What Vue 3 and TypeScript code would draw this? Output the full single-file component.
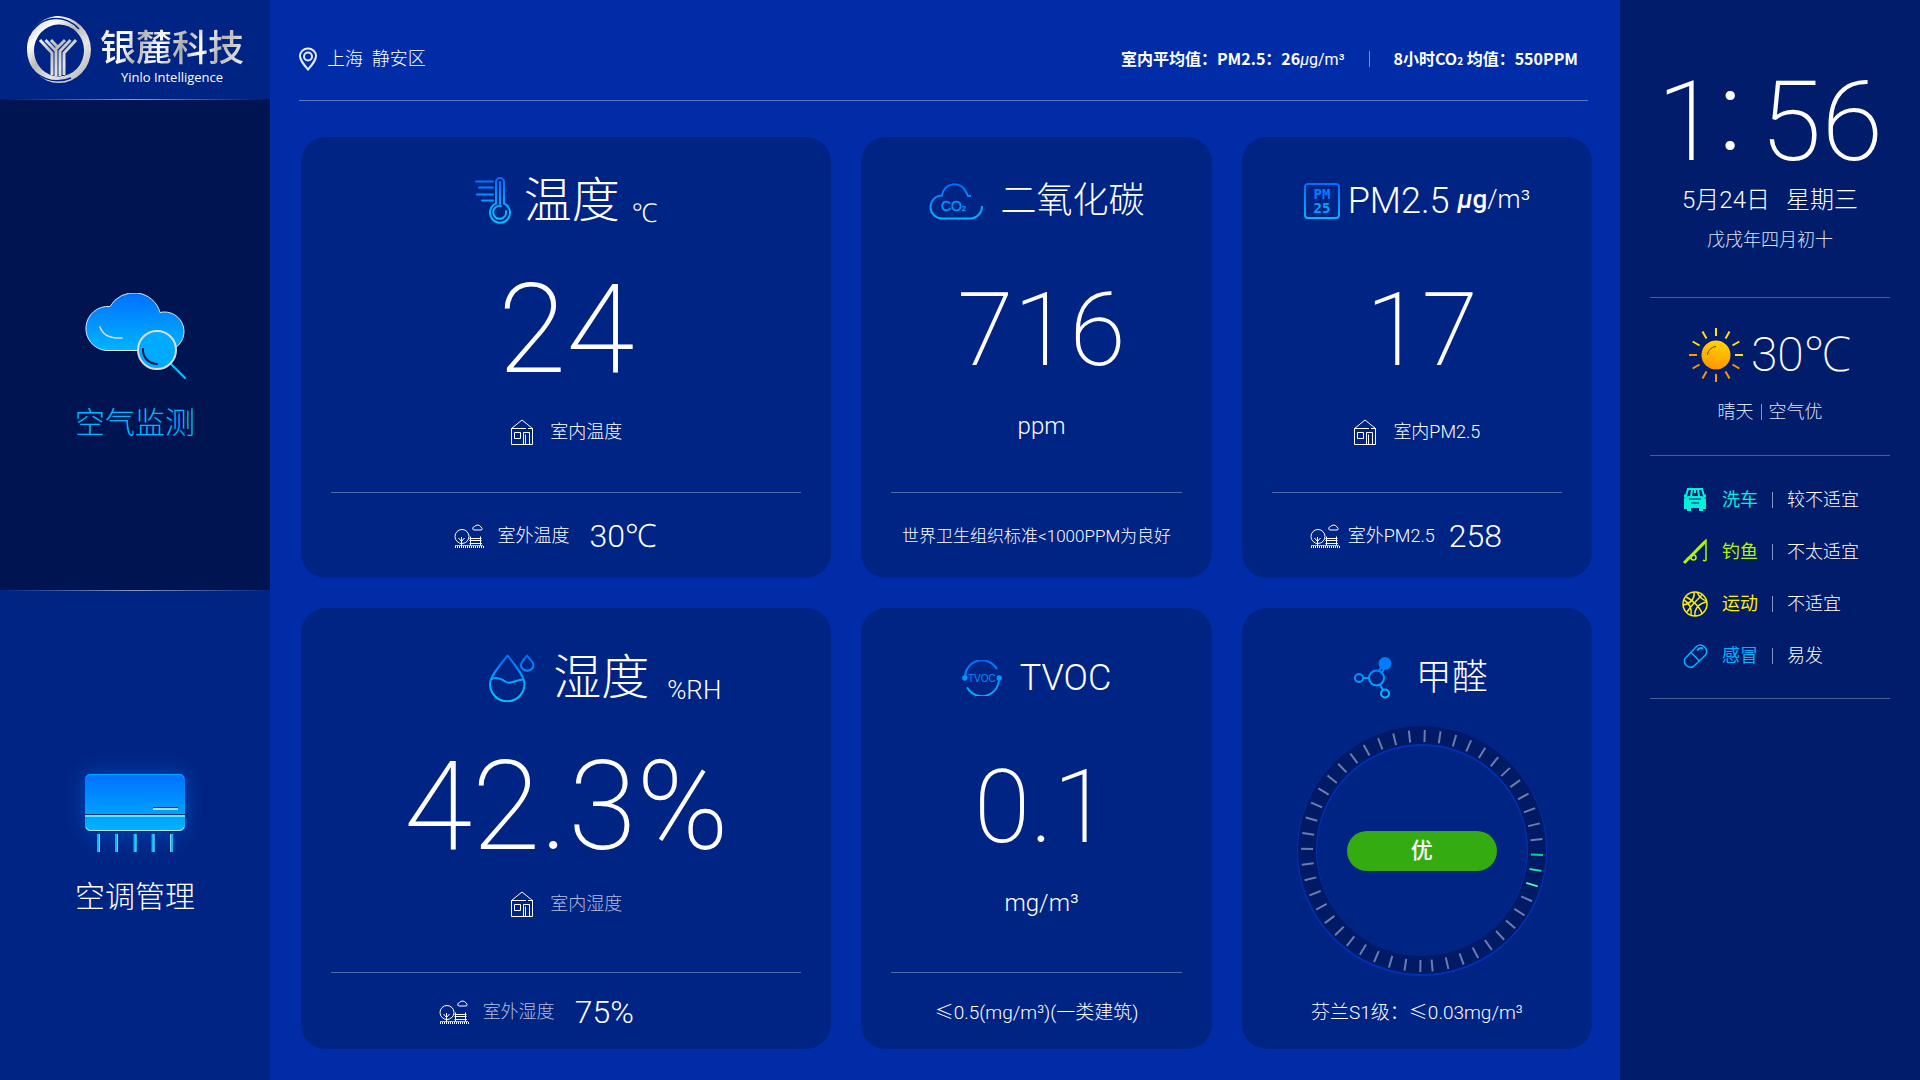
<script setup lang="ts">
interface Tick {
  angle: number
  color: string
}

interface Advice {
  key: string
  label: string
  value: string
  color: string
}

const greens: Record<number, string> = { 12: '#00d98b', 13: '#1fe59a', 14: '#5cf0b4' }

const ticks: Tick[] = []
for (let i = 0; i < 24; i++) {
  ticks.push({ angle: 1.3 + i * 7.55, color: greens[i] ?? '#6a7db0' })
}
for (let i = 0; i < 24; i++) {
  ticks.push({ angle: 180.8 + i * 7.52, color: '#6a7db0' })
}

const rays: number[] = Array.from({ length: 12 }, (_, i) => i * 30)

const advice: Advice[] = [
  { key: 'wash', label: '洗车', value: '较不适宜', color: '#00f0dc' },
  { key: 'fish', label: '钓鱼', value: '不太适宜', color: '#b4f500' },
  { key: 'sport', label: '运动', value: '不适宜', color: '#fff000' },
  { key: 'cold', label: '感冒', value: '易发', color: '#00b4ff' },
]
</script>

<template>
  <div class="screen">
    <svg class="defs" width="0" height="0" aria-hidden="true">
      <defs>
        <linearGradient id="blue" gradientUnits="userSpaceOnUse" x1="0" y1="0" x2="0" y2="42">
          <stop offset="0" stop-color="#006cff" />
          <stop offset="1" stop-color="#00c4ff" />
        </linearGradient>
        <linearGradient id="panel" x1="0" y1="0" x2="0" y2="1">
          <stop offset="0" stop-color="#0070ff" />
          <stop offset="1" stop-color="#00b4ff" />
        </linearGradient>
        <linearGradient id="silver" gradientUnits="userSpaceOnUse" x1="0" y1="0" x2="64" y2="67">
          <stop offset="0" stop-color="#b0b0b0" />
          <stop offset="0.25" stop-color="#ffffff" />
          <stop offset="0.45" stop-color="#b9b9b9" />
          <stop offset="0.65" stop-color="#e6e6e6" />
          <stop offset="1" stop-color="#a8a8a8" />
        </linearGradient>
        <linearGradient id="sun" gradientUnits="userSpaceOnUse" x1="32" y1="0" x2="22" y2="54">
          <stop offset="0" stop-color="#fff200" />
          <stop offset="0.5" stop-color="#ffb400" />
          <stop offset="1" stop-color="#ff7800" />
        </linearGradient>
        <symbol id="house" viewBox="0 0 24 26">
          <g fill="none" stroke="currentColor" stroke-width="1">
            <path d="M1.500 9.500 12 1 22.500 9.500M1.500 9.500V25.500H22.500V9.500M1 9.500H16M18 9.500H23" />
            <path d="M4.500 13.500H10.500V19.500H4.500ZM13.500 25V13.500H19.500V25M15.500 15.500V25" />
          </g>
        </symbol>
        <symbol id="park" viewBox="0 0 30 24">
          <g fill="none" stroke="currentColor" stroke-width="1">
            <circle cx="8" cy="12.500" r="7" />
            <path d="M7.500 22V13M4.500 14 7.500 17.500 10.500 14" />
            <path d="M19.500 6H27.500A2 2 0 0 0 27 3 4 4 0 0 0 20.500 2.500 2 2 0 0 0 19.500 6Z" />
            <path d="M16.500 12.500V21.500M26.500 12.500V21.500M15.500 14.500H27.500M15.500 16.500H27.500M15.500 19.500H28" />
            <path d="M1 23H30" stroke-width="2" stroke-dasharray="1 1" />
            <path d="M1 21.500H29" opacity="0.700" />
          </g>
        </symbol>
      </defs>
    </svg>

    <aside class="side">
      <div class="brand">
        <svg class="brand-mark" width="64" height="68" viewBox="0 0 64 68" aria-hidden="true">
          <path fill="url(#silver)" fill-rule="evenodd" d="M0 34A32 33 0 0 1 29 0 34 34 0 0 1 64 34 32 33.500 0 0 1 32 67 32 33 0 0 1 0 34ZM7 35A25 26 0 1 0 57 34 25 26 0 1 0 7 35Z" />
          <path fill="none" stroke="#002484" stroke-width="1.500" d="M2 20A30 30 0 0 1 52 13M1 46A32 30 0 0 0 44 62" />
          <g fill="none" stroke="url(#silver)" stroke-width="3">
            <path d="M13 24 25 37V59M18.500 24 29 35V60M24 24 31 31.500M49 24 37 37V59M43.500 24 33 35V60M38 24 29 33" />
          </g>
        </svg>
        <div class="brand-text">
          <strong class="brand-name">银麓科技</strong>
          <span class="brand-en">Yinlo Intelligence</span>
        </div>
      </div>
      <nav class="nav">
        <a class="nav-item active" href="#air">
          <svg width="104" height="86" viewBox="0 0 104 86" aria-hidden="true">
            <path d="M23 57.500A22 22 0 1 1 27 13.500 27 26 0 0 1 77 19.500 19.500 19.500 0 1 1 86 57.500Z" fill="url(#panel)" stroke="#dfe6ee" />
            <path d="M17 34Q21 46 39 45" fill="none" stroke="#dcdcdc" stroke-width="1.500" stroke-linecap="round" />
            <path d="M88 71 102 85" stroke="#00c4ff" stroke-width="2" stroke-linecap="round" />
            <circle cx="74" cy="57" r="19" fill="#00aaff" stroke="#dcdcdc" stroke-width="2" />
            <path d="M60 56A14 14 0 0 0 74 71" fill="none" stroke="#001452" stroke-width="2" stroke-linecap="round" />
          </svg>
          <span>空气监测</span>
        </a>
        <a class="nav-item" href="#conditioner">
          <svg class="glow" width="102" height="80" viewBox="0 0 102 80" aria-hidden="true">
            <rect x="1" y="1" width="100" height="57" rx="5" fill="url(#panel)" />
            <path d="M2 5A5 5 0 0 1 6 1.500H96A5 5 0 0 1 100 5" fill="none" stroke="#00a8ff" />
            <path d="M2 54A5 5 0 0 0 6 57.500H96A5 5 0 0 0 100 54" fill="none" stroke="#c8dce8" />
            <path d="M1 41.500H101M69 34.500H94" stroke="#00307e" />
            <path d="M1 43H101" stroke="#5fe6f5" stroke-width="2" />
            <path d="M69 36H94" stroke="#b4d8d8" stroke-width="2" />
            <path d="M14.500 61V79M32.500 61V79M51 61V79M69 61V79M87.500 61V79" stroke="#00b9ff" stroke-width="3" />
            <path d="M15.500 61V79M33.500 61V79M52 61V79M70 61V79M86.500 61V79" stroke="#7fd8e0" stroke-width="1" />
          </svg>
          <span>空调管理</span>
        </a>
      </nav>
    </aside>

    <main class="main">
      <header class="top">
        <div class="place">
          <svg width="20" height="24" viewBox="0 0 20 24" fill="none" stroke="#e6ebf7" stroke-width="2" aria-hidden="true">
            <path d="M9 22.500C4 16.500 1 13 1 9A8 7.500 0 0 1 17 9C17 13 14 16.500 9 22.500Z" />
            <circle cx="9" cy="9.500" r="4" />
          </svg>
          <span>上海&nbsp; 静安区</span>
        </div>
        <div class="averages">
          <span>室内平均值：PM2.5：26<span class="thin"><i>µ</i>g/m³</span></span>
          <span class="bar"></span>
          <span>8小时CO<small>2</small> 均值：550PPM</span>
        </div>
      </header>

      <div class="grid">
        <section class="card">
          <h2 class="head large">
            <svg width="37" height="48" viewBox="0 0 37 48" fill="none" stroke="url(#blue)" stroke-width="2" stroke-linecap="round" aria-hidden="true">
              <path d="M1 4.500H18M4 10.500H18M2 17.500H18M7 23.500H18" />
              <path d="M21 26.500V5A4 4 0 0 1 29 5V26.500A10 10 0 1 1 21 26.500Z" />
              <path d="M25 5V27M26 29A6.500 6.500 0 1 0 31 34" />
            </svg>
            <span>温度</span>
            <small class="unit">℃</small>
          </h2>
          <p class="value big">24</p>
          <p class="note"><svg width="24" height="26" aria-hidden="true"><use href="#house" /></svg>室内温度</p>
          <p class="foot out"><svg width="30" height="24" aria-hidden="true"><use href="#park" /></svg>室外温度<b>30℃</b></p>
        </section>

        <section class="card">
          <h2 class="head">
            <svg width="54" height="37" viewBox="0 0 54 37" fill="none" stroke="url(#blue)" stroke-width="2" aria-hidden="true">
              <path d="M53 23A12 12 0 0 1 41 35.500H13A11.500 11.500 0 0 1 13 12.500A12.500 12.500 0 0 1 37 9L39 13H42" />
              <text x="12" y="28" class="glyph" font-size="14" fill="#0096ff" stroke="#0096ff" stroke-width="0.400">CO<tspan font-size="7">2</tspan></text>
            </svg>
            <span>二氧化碳</span>
          </h2>
          <p class="value">716</p>
          <p class="note measure">ppm</p>
          <p class="foot fine">世界卫生组织标准&lt;1000PPM为良好</p>
        </section>

        <section class="card">
          <h2 class="head tight">
            <svg width="36" height="36" viewBox="0 0 36 36" aria-hidden="true">
              <rect x="1" y="1" width="34" height="34" rx="3" fill="none" stroke="url(#blue)" stroke-width="2" />
              <text x="18" y="16" class="pixel" font-size="14" fill="#007eff">PM</text>
              <text x="18" y="30" class="pixel" font-size="14" fill="#00a4ff">25</text>
            </svg>
            <span>PM2.5</span>
            <small class="unit up"><i>µ</i><b>g</b>/m³</small>
          </h2>
          <p class="value">17</p>
          <p class="note"><svg width="24" height="26" aria-hidden="true"><use href="#house" /></svg>室内PM2.5</p>
          <p class="foot out narrow"><svg width="30" height="24" aria-hidden="true"><use href="#park" /></svg>室外PM2.5<b>258</b></p>
        </section>

        <section class="card lower">
          <h2 class="head large humid">
            <svg width="46" height="48" viewBox="0 0 46 48" fill="none" stroke="url(#blue)" stroke-width="2" stroke-linejoin="round" aria-hidden="true">
              <path d="M18.500 1.500C12 10 1 22 1 30A17 17 0 0 0 35.500 30C35.500 22 25 10 18.500 1.500Z" />
              <path d="M2.500 25C9 22 14 26 17 28 22 31 28 25 34.500 25.500" />
              <path d="M38 1.500C35.500 5 32 8 32 11A6 5.500 0 0 0 44.500 11C44.500 8 40.500 5 38 1.500Z" />
            </svg>
            <span>湿度</span>
            <small class="unit">%RH</small>
          </h2>
          <p class="value big">42.3%</p>
          <p class="note dim"><svg width="24" height="26" aria-hidden="true"><use href="#house" /></svg>室内湿度</p>
          <p class="foot out dim"><svg width="30" height="24" aria-hidden="true"><use href="#park" /></svg>室外湿度<b>75%</b></p>
        </section>

        <section class="card lower">
          <h2 class="head">
            <svg width="40" height="36" viewBox="0 0 40 36" fill="none" stroke="url(#blue)" stroke-width="2" stroke-linecap="round" aria-hidden="true">
              <path d="M3 18A17 17 0 0 1 34.500 8.500M37 18A17 17 0 0 1 5.500 28" />
              <circle cx="2.800" cy="18" r="2.700" fill="#0096ff" stroke="none" />
              <circle cx="37.200" cy="18" r="2.700" fill="#0096ff" stroke="none" />
              <text x="6" y="22" class="glyph" font-size="10" fill="#0090ff" stroke="none">TVOC</text>
            </svg>
            <span>TVOC</span>
          </h2>
          <p class="value">0.1</p>
          <p class="note measure">mg/m³</p>
          <p class="foot standard"><span><span class="cjk">≤</span>0.5(mg/m³)(一类建筑)</span></p>
        </section>

        <section class="card lower">
          <h2 class="head wide-gap">
            <svg width="38" height="42" viewBox="0 0 38 42" fill="none" stroke="url(#blue)" stroke-width="2" aria-hidden="true">
              <circle cx="22.500" cy="21" r="7.500" />
              <circle cx="5" cy="21" r="4" />
              <circle cx="31" cy="36.500" r="4" />
              <circle cx="31" cy="6.500" r="6.500" fill="#007aff" stroke="none" />
              <path d="M9 21.100H15M26 28 29 33M25 14 27.500 9.500M28 15.500 30 12" />
            </svg>
            <span>甲醛</span>
          </h2>
          <div class="gauge">
            <svg width="252" height="252" viewBox="-126 -126 252 252" aria-hidden="true">
              <circle r="115" fill="none" stroke="#0031b4" stroke-width="20" />
              <circle r="115" cy="-1" fill="none" stroke="#001a66" stroke-width="18" />
              <line
                v-for="t in ticks"
                :key="t.angle"
                y1="-121"
                y2="-109"
                :stroke="t.color"
                stroke-width="2"
                :transform="`rotate(${t.angle})`"
              />
            </svg>
            <span class="pill">优</span>
          </div>
          <p class="foot standard plain"><span>芬兰S1级：<span class="cjk">≤</span>0.03mg/m³</span></p>
        </section>
      </div>
    </main>

    <aside class="info">
      <div class="clock">
        <time class="time"><span>1</span><span class="colon">:</span><span>56</span></time>
        <p class="date"><span>5月24日</span><span>星期三</span></p>
        <p class="lunar">戊戌年四月初十</p>
      </div>
      <div class="weather">
        <div class="now">
          <svg width="54" height="56" viewBox="0 0 54 54" aria-hidden="true">
            <circle cx="27" cy="27" r="14.500" fill="url(#sun)" />
            <path
              v-for="r in rays"
              :key="r"
              d="M26 0H28V8H26Z"
              :fill="r > 90 && r < 285 ? '#ff9600' : '#ffe600'"
              :transform="`rotate(${r} 27 27)`"
            />
            <path d="M18.500 27A9 9 0 0 1 27 18.500" fill="none" stroke="#6a4a00" />
          </svg>
          <span>30℃</span>
        </div>
        <p class="sky">晴天<span class="bar"></span>空气优</p>
      </div>
      <ul class="advice">
        <li v-for="a in advice" :key="a.key">
          <svg width="26" height="26" viewBox="0 0 26 26" fill="none" :stroke="a.color" stroke-width="1.500" aria-hidden="true">
            <template v-if="a.key === 'wash'">
              <path d="M5 2H21M6 2 4 9M20 2 22 9M10 3 9 9M16 3 17 9M13 3V6" stroke-width="2" />
              <path d="M2 13C2 10 5 9 8 9H18C21 9 24 10 24 13V22H21V24H17V21H9V24H5V22H2Z" :fill="a.color" stroke="none" />
              <path d="M2 9H5M21 9H24" stroke-width="3" />
              <path d="M7 12H19M9 16H17" stroke="#001c6b" stroke-width="1" />
            </template>
            <template v-else-if="a.key === 'fish'">
              <path d="M2 24 23 3" stroke-width="3" />
              <path d="M14 11 24 1V21A2 2 0 0 1 21 21" />
              <circle cx="11.500" cy="18.500" r="2.500" />
              <path d="M5 20 9 18" stroke-width="2" />
            </template>
            <template v-else-if="a.key === 'sport'">
              <circle cx="13" cy="13" r="12" />
              <path d="M4 6C9 8 18 16 20 22.500M20 4C14 10 8 16 5 21M12 1C13 8 8 13 1 14M25 11C17 12 12 18 13 25M15 1C17 6 21 9 25 10M2 9C7 12 10 17 9 24" />
            </template>
            <template v-else>
              <path d="M3 15.500 14.500 3.500A6.300 6.300 0 0 1 23.500 12L11.500 23.500A6.200 6.200 0 0 1 3 15.500ZM9 9.500 17 17.500" />
              <path d="M15 7.500C17 5 19 4.500 21 5.500" stroke-width="2" />
            </template>
          </svg>
          <span class="label" :style="{ color: a.color }">{{ a.label }}</span>
          <span class="bar"></span>
          <span>{{ a.value }}</span>
        </li>
      </ul>
    </aside>
  </div>
</template>

<style>
body {
  margin: 0;
  background: #002da7;
}
</style>

<style scoped>
.screen {
  display: grid;
  grid-template-columns: 270px minmax(0, 1fr) 300px;
  min-height: 100vh;
  background: #002da7;
  color: #fff;
  font-family: Roboto, "Noto Sans", "Noto Sans CJK SC", sans-serif;
  font-size: 18px;
  font-weight: 300;
  line-height: 24px;
}

.defs {
  position: absolute;
}

p,
h2,
ul {
  margin: 0;
  padding: 0;
}

svg {
  flex: none;
}

.glyph {
  font-family: "Liberation Sans", Arial, sans-serif;
}

.pixel {
  font-family: "DejaVu Sans Mono", monospace;
  font-weight: 700;
  text-anchor: middle;
}

.cjk {
  font-family: "Noto Sans CJK SC", sans-serif;
}

.bar {
  display: inline-block;
  width: 1px;
  height: 16px;
  background: #8492c4;
}

/* Left column */
.side {
  display: flex;
  flex-direction: column;
  background: #002484;
}

.brand {
  display: flex;
  align-items: center;
  gap: 9px;
  height: 99px;
  padding-left: 27px;
}

.brand-text {
  display: flex;
  flex-direction: column;
  align-items: center;
  padding-top: 14px;
}

.brand-name {
  font-size: 36px;
  font-weight: 500;
  line-height: 40px;
  background: linear-gradient(110deg, #e8e8e8, #fff 18%, #b0b0b0 28%, #fff 42%, #a8a8a8 56%, #fff 68%, #b4b4b4 80%, #f4f4f4);
  background-clip: text;
  color: transparent;
}

.brand-en {
  font-family: "Open Sans", sans-serif;
  font-size: 13px;
  font-weight: 500;
  line-height: 16px;
}

.nav {
  display: grid;
  flex: 1;
  grid-template-rows: 1fr 1fr;
}

.nav-item {
  display: flex;
  flex-direction: column;
  align-items: center;
  gap: 24px;
  padding-top: 182px;
  color: #fff;
  font-size: 30px;
  line-height: 40px;
  text-decoration: none;
  border-top: 1px solid;
  border-image: linear-gradient(90deg, transparent, #8a97c8 50%, transparent) 1;
}

.nav-item.active {
  padding-top: 193px;
  background: #001452;
  color: #00b8ff;
}

.glow {
  filter: drop-shadow(0 0 10px rgba(0, 130, 255, 0.4));
}

/* Centre */
.main {
  display: flex;
  flex-direction: column;
  padding: 0 28px 31px 29px;
}

.top {
  display: flex;
  align-items: center;
  justify-content: space-between;
  height: 82px;
  margin-right: 4px;
  padding: 18px 10px 0 0;
  border-bottom: 1px solid #5f78c6;
}

.place,
.averages {
  display: flex;
  align-items: center;
}

.place {
  gap: 8px;
}

.averages {
  gap: 24px;
  font-family: "Noto Sans CJK SC", sans-serif;
  font-size: 16px;
  font-weight: 700;
}

.averages small {
  font-size: 10px;
}

.thin {
  font-family: Roboto, sans-serif;
  font-weight: 400;
}

.grid {
  display: grid;
  flex: 1;
  grid-template-columns: 53fr 35fr 35fr;
  grid-template-rows: 1fr 1fr;
  gap: 30px;
  padding: 36px 0 0 2px;
}

.card {
  display: flex;
  flex-direction: column;
  padding: 0 30px;
  border-radius: 25px;
  background: #002484;
}

.card.lower {
  padding-top: 6px;
}

.head {
  display: flex;
  align-items: center;
  justify-content: center;
  gap: 18px;
  height: 128px;
  margin-bottom: 3px;
  font-size: 36px;
  font-weight: 300;
  line-height: 48px;
}

.large {
  gap: 12px;
  font-size: 48px;
}

.tight {
  gap: 8px;
}

.wide-gap {
  gap: 24px;
  padding-left: 8px;
}

.humid {
  gap: 18px;
  padding-left: 78px;
}

.unit {
  align-self: flex-end;
  margin-bottom: 28px;
  font-size: 26px;
}

.unit.up {
  align-self: center;
  margin-bottom: 4px;
}

.unit b,
.unit i {
  font-weight: 500;
}

.value {
  padding-left: 10px;
  font-size: 102px;
  font-weight: 200;
  line-height: 124px;
  text-align: center;
}

.big {
  padding-left: 0;
  font-size: 124px;
}

.note {
  display: flex;
  align-items: center;
  justify-content: center;
  gap: 16px;
  height: 80px;
}

.lower .note {
  height: 70px;
}

.note.measure {
  padding: 0 0 12px 10px;
  box-sizing: border-box;
  font-size: 24px;
  line-height: 28px;
}

.lower .note.measure {
  padding-bottom: 2px;
}

.dim {
  color: #b4bedb;
}

.foot {
  display: flex;
  align-items: center;
  justify-content: center;
  height: 85px;
  margin-top: auto;
  border-top: 1px solid #5369a8;
}

.lower .foot {
  height: 74px;
  padding-top: 2px;
}

.foot.plain {
  border-color: transparent;
}

.standard {
  font-size: 19px;
}

.fine {
  font-size: 17px;
}

.out {
  gap: 14px;
  padding-right: 22px;
}

.out b {
  margin-left: 6px;
  color: #fff;
  font-size: 32px;
  font-weight: 300;
}

.narrow {
  gap: 8px;
}

.out.dim {
  padding-right: 60px;
}

.dim svg {
  color: #fff;
}

.gauge {
  display: grid;
  place-items: center;
  margin: -20px 0 -12px;
  padding-left: 10px;
}

.gauge > * {
  grid-area: 1 / 1;
}

.pill {
  width: 150px;
  border-radius: 20px;
  background: #35ab12;
  font-size: 22px;
  font-weight: 500;
  line-height: 40px;
  text-align: center;
}

/* Right column */
.info {
  padding: 0 30px;
  background: #001c6b;
}

.clock {
  display: flex;
  flex-direction: column;
  align-items: center;
  height: 297px;
  border-bottom: 1px solid #4a5c98;
}

.time {
  display: flex;
  align-items: center;
  padding-top: 60px;
  font-size: 112px;
  font-weight: 200;
  line-height: 124px;
}

.colon {
  margin: -20px 18px 0 0;
  font-weight: 300;
}

.date {
  display: flex;
  gap: 16px;
  font-size: 24px;
  line-height: 32px;
}

.lunar,
.sky {
  color: #dde2f2;
}

.lunar {
  padding-top: 12px;
}

.weather {
  display: flex;
  flex-direction: column;
  align-items: center;
  height: 157px;
  border-bottom: 1px solid #4a5c98;
}

.now {
  display: flex;
  align-items: center;
  gap: 8px;
  padding-top: 29px;
  font-size: 48px;
  font-weight: 200;
  line-height: 56px;
}

.sky {
  display: flex;
  align-items: center;
  gap: 7px;
  padding-top: 17px;
}

.advice {
  padding: 18px 0 16px 32px;
  border-bottom: 1px solid #4a5c98;
  list-style: none;
}

.advice li {
  display: flex;
  align-items: center;
  gap: 14px;
  height: 52px;
}

.label {
  font-weight: 400;
}
</style>
